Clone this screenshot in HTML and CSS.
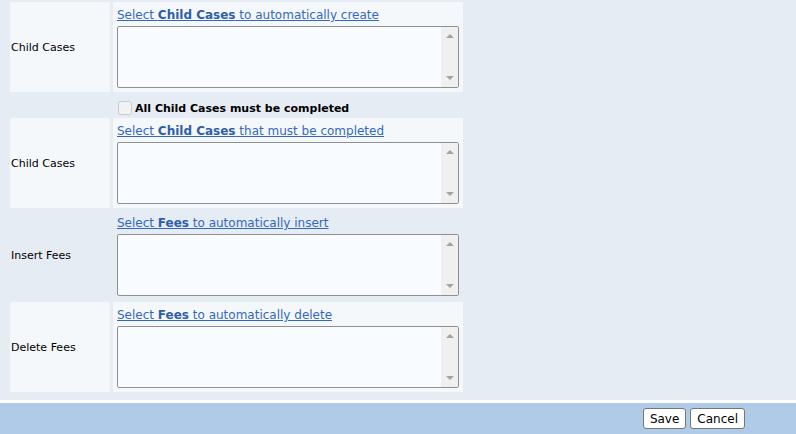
FILE: index.html
```html
<!DOCTYPE html>
<html lang="en">
<head>
    <meta charset="UTF-8">
    <title>Case Type Actions</title>
    <link rel="stylesheet" href="styles.css">
</head>
<body>
    <div class="form-area">
        <table class="form-table">
            <tr class="row-alt">
                <td class="label">Child Cases</td>
                <td class="value">
                    <a href="#" class="picker">Select <b>Child Cases</b> to automatically create</a>
                    <div class="list-wrap">
                        <textarea class="list-box"></textarea>
                        <div class="scroll-rail"><span class="arrow-up"></span><span class="arrow-down"></span></div>
                    </div>
                </td>
            </tr>
            <tr>
                <td class="label"></td>
                <td class="value check-cell">
                    <label class="check"><input type="checkbox" disabled> All Child Cases must be completed</label>
                </td>
            </tr>
            <tr class="row-alt">
                <td class="label">Child Cases</td>
                <td class="value">
                    <a href="#" class="picker">Select <b>Child Cases</b> that must be completed</a>
                    <div class="list-wrap">
                        <textarea class="list-box"></textarea>
                        <div class="scroll-rail"><span class="arrow-up"></span><span class="arrow-down"></span></div>
                    </div>
                </td>
            </tr>
            <tr>
                <td class="label">Insert Fees</td>
                <td class="value">
                    <a href="#" class="picker">Select <b>Fees</b> to automatically insert</a>
                    <div class="list-wrap">
                        <textarea class="list-box"></textarea>
                        <div class="scroll-rail"><span class="arrow-up"></span><span class="arrow-down"></span></div>
                    </div>
                </td>
            </tr>
            <tr class="row-alt">
                <td class="label">Delete Fees</td>
                <td class="value">
                    <a href="#" class="picker">Select <b>Fees</b> to automatically delete</a>
                    <div class="list-wrap">
                        <textarea class="list-box"></textarea>
                        <div class="scroll-rail"><span class="arrow-up"></span><span class="arrow-down"></span></div>
                    </div>
                </td>
            </tr>
        </table>
    </div>

    <div class="footer">
        <button>Save</button>
        <button>Cancel</button>
    </div>
</body>
</html>
```

FILE: styles.css
```css
html, body {
    margin: 0;
    height: 100%;
}
body {
    font-family: Tahoma, "DejaVu Sans", Verdana, sans-serif;
    background-color: #e6ecf3;
    display: flex;
    flex-direction: column;
    overflow: hidden;
}
.form-area {
    padding: 0 0 6px 7px;
}
.form-table {
    border-spacing: 3px 2px;
}
.form-table td {
    padding: 0;
}
.row-alt td {
    background-color: #f5f8fb;
}
.label {
    width: 99px;
    font-size: 11px;
    color: #000;
    padding-left: 1px !important;
    vertical-align: middle;
}
.value {
    width: 341px;
    height: 90px;
    padding: 0 4px !important;
    vertical-align: top;
}
.picker {
    display: block;
    margin-top: 5px;
    font-size: 12px;
    line-height: 17px;
    color: #3268c0;
}
.picker b {
    color: #2e5ea8;
}
.list-wrap {
    position: relative;
    width: 342px;
    height: 62px;
    margin-top: 2px;
}
.list-box {
    display: block;
    box-sizing: border-box;
    width: 100%;
    height: 100%;
    margin: 0;
    padding: 2px 20px 2px 2px;
    border: 1px solid #8f8f8f;
    border-radius: 2px;
    background-color: #f8fbff;
    resize: none;
}
.scroll-rail {
    position: absolute;
    top: 1px;
    right: 1px;
    bottom: 1px;
    width: 17px;
    background-color: #f0f0f0;
    border-radius: 0 1px 1px 0;
}
.arrow-up, .arrow-down {
    position: absolute;
    left: 5px;
    width: 0;
    height: 0;
    border-left: 4px solid transparent;
    border-right: 4px solid transparent;
}
.arrow-up {
    top: 7px;
    border-bottom: 4px solid #a3a3a3;
}
.arrow-down {
    bottom: 7px;
    border-top: 4px solid #a3a3a3;
}
.check-cell {
    height: 22px;
    vertical-align: bottom;
}
.check {
    display: flex;
    align-items: center;
    gap: 3px;
    padding-bottom: 1px;
    font-size: 11px;
    font-weight: bold;
    color: #000;
}
.check input {
    margin: 0 0 0 1px;
    width: 14px;
    height: 14px;
}
.footer {
    margin-top: auto;
    height: 31px;
    border-top: 3px solid #fff;
    background-color: #b0cbe8;
    display: flex;
    justify-content: flex-end;
    align-items: center;
    gap: 4px;
    padding-right: 51px;
}
.footer button {
    font-family: Tahoma, "DejaVu Sans", sans-serif;
    font-size: 12px;
    height: 21px;
    padding: 0 6px;
    background-color: #fff;
    border: 1px solid #767676;
    border-radius: 3px;
    color: #000;
}
```
